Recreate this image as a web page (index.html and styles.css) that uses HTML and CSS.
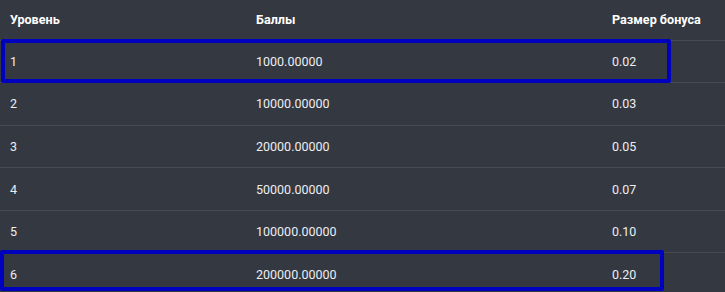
FILE: index.html
```html
<!DOCTYPE html>
<html lang="ru">
<head>
<meta charset="utf-8">
<link rel="stylesheet" href="styles.css">
</head>
<body>
<div class="wrap">
  <table class="levels">
    <thead>
      <tr><th class="c1">Уровень</th><th class="c2">Баллы</th><th class="c3">Размер бонуса</th></tr>
    </thead>
    <tbody>
      <tr><td>1</td><td>1000.00000</td><td>0.02</td></tr>
      <tr><td>2</td><td>10000.00000</td><td>0.03</td></tr>
      <tr><td>3</td><td>20000.00000</td><td>0.05</td></tr>
      <tr><td>4</td><td>50000.00000</td><td>0.07</td></tr>
      <tr><td>5</td><td>100000.00000</td><td>0.10</td></tr>
      <tr><td>6</td><td>200000.00000</td><td>0.20</td></tr>
    </tbody>
  </table>
  <div class="mark mark-top"></div>
  <div class="mark mark-bottom"></div>
</div>
</body>
</html>
```

FILE: styles.css
```css
html, body {
  margin: 0;
  padding: 0;
  background: #343840;
}
.wrap {
  position: relative;
  width: 725px;
  height: 292px;
  overflow: hidden;
}
.levels {
  border-collapse: collapse;
  width: 800px;
  font-family: Roboto, "Liberation Sans", sans-serif;
  color: #eceef0;
}
.levels th {
  text-align: left;
  font-weight: 700;
  font-size: 12.6px;
  color: #ffffff;
  height: 40px;
  padding: 0 10px;
  box-sizing: border-box;
}
.levels .c1 { width: 246px; }
.levels .c2 { width: 356px; }
.levels td {
  font-size: 12.5px;
  height: 42.6px;
  padding: 0 10px;
  box-sizing: border-box;
  border-top: 1px solid #464b53;
}
.mark {
  position: absolute;
  border: 4px solid #0000bf;
  border-radius: 2px;
  box-sizing: border-box;
}
.mark-top {
  left: 1px;
  top: 39px;
  width: 670px;
  height: 44px;
}
.mark-bottom {
  left: 0;
  top: 250px;
  width: 664px;
  height: 41px;
}
```
